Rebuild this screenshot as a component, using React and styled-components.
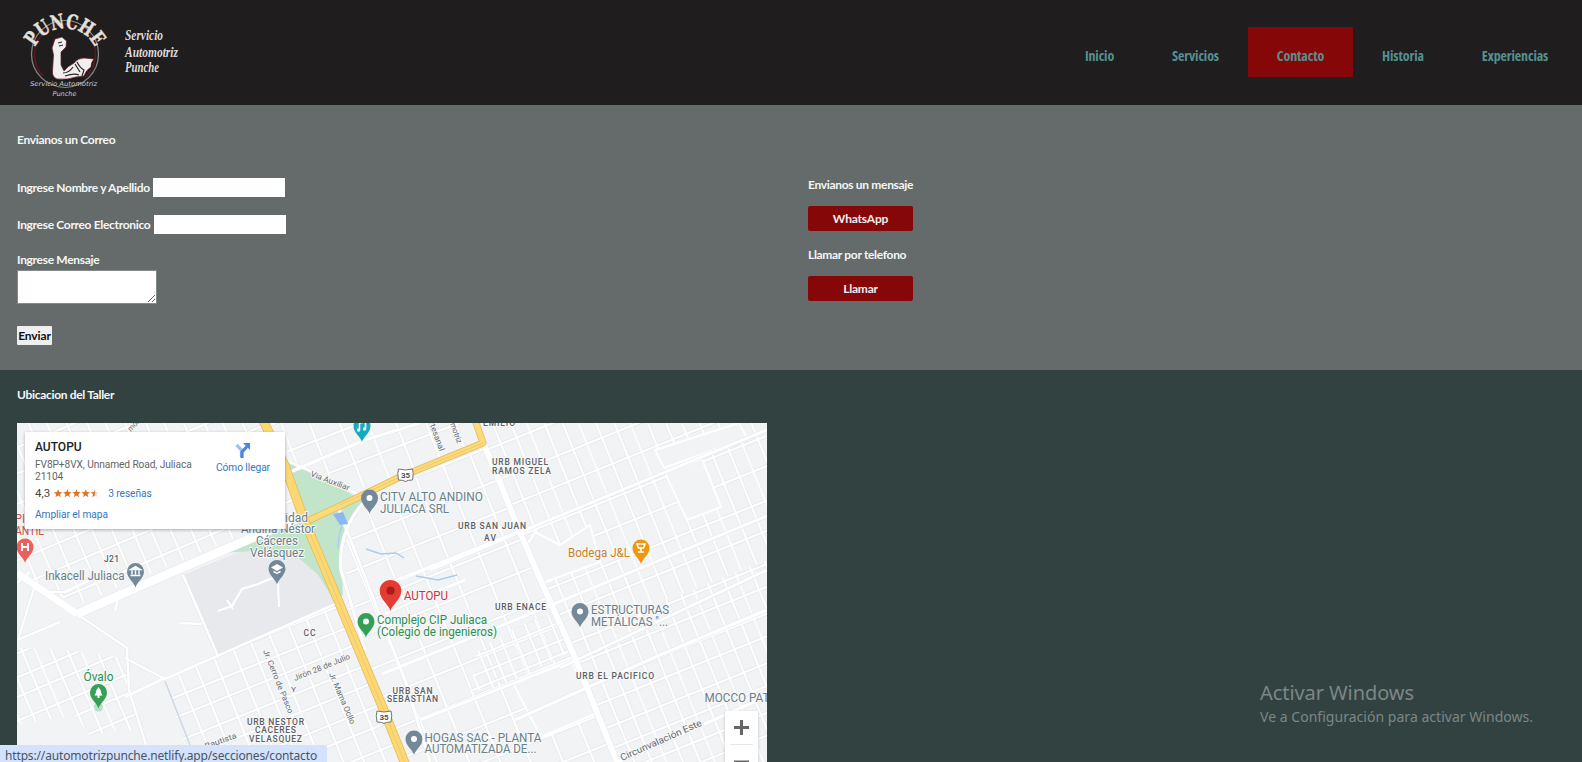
import React from 'react';
import styled, { createGlobalStyle } from 'styled-components';

const Global = createGlobalStyle`
  * { box-sizing: border-box; }
  html, body { margin: 0; height: 100%; overflow: hidden; background: #324241; }
  body { font-family: Lato, "Liberation Sans", sans-serif; }
`;

const Page = styled.div`
  position: relative;
  height: 762px;
  overflow: hidden;
  background: #324241;
`;

const Header = styled.header`
  display: flex;
  align-items: center;
  justify-content: space-between;
  height: 105px;
  padding-right: 5px;
  background: #1f1d1e;
`;

const Nav = styled.nav`
  display: flex;
`;

const NavItem = styled.a`
  display: flex;
  align-items: center;
  justify-content: center;
  width: ${(p) => p.$w}px;
  height: 50px;
  padding-top: 6px;
  margin-bottom: 1px;
  color: #569090;
  background: ${(p) => (p.$active ? '#850708' : 'transparent')};
  font: 700 14px "Open Sans", sans-serif;
  font-stretch: 75%;
  letter-spacing: -0.13px;
  white-space: nowrap;
`;

const ContactArea = styled.section`
  display: flex;
  height: 265px;
  background: #656b6a;
`;

const FormColumn = styled.form`
  width: 808px;
  padding: 26px 0 0 17px;
`;

const Label = styled.div`
  color: #f4f6f6;
  font-weight: 700;
  font-size: 12px;
  line-height: 18px;
  letter-spacing: -0.32px;
  white-space: nowrap;
`;

const FieldRow = styled.div`
  display: flex;
  align-items: center;
  gap: ${(p) => p.$gap}px;
  height: 19px;
  margin-top: ${(p) => p.$top}px;
`;

const Input = styled.input`
  width: 132px;
  height: 19px;
  border: 0;
  background: #fff;
`;

const MessageLabel = styled(Label)`
  margin-top: 17px;
`;

const Message = styled.textarea`
  display: block;
  width: 140px;
  height: 34px;
  margin-top: 1px;
  border: 1px solid #858a8a;
  background: #fff;
`;

const Send = styled.button`
  display: block;
  width: 35px;
  height: 19px;
  margin-top: 22px;
  padding: 0;
  border: 0;
  border-radius: 1px;
  background: #efefef;
  color: #111;
  font: 700 12px Lato, sans-serif;
  letter-spacing: -0.1px;
`;

const ActionColumn = styled.div`
  padding-top: 71px;
`;

const Action = styled.a`
  display: flex;
  align-items: center;
  justify-content: center;
  width: 105px;
  height: 25px;
  margin: 12px 0 15px;
  border-radius: 2px;
  background: #850708;
  color: #f6eeee;
  font-weight: 700;
  font-size: 12px;
  letter-spacing: -0.2px;
`;

const Location = styled.section`
  padding: 16px 0 0 17px;
`;

const MapFrame = styled.div`
  position: relative;
  width: 750px;
  height: 339px;
  margin-top: 19px;
  overflow: hidden;
  background: #f1f3f4;
  & > svg { display: block; }
`;

const PlaceCard = styled.div`
  position: absolute;
  left: 8px;
  top: 9px;
  display: flex;
  justify-content: space-between;
  width: 260px;
  height: 97px;
  padding: 8px 15px 0 10px;
  background: #fff;
  box-shadow: 0 1px 3px rgba(0, 0, 0, 0.3);
  font-family: Roboto, sans-serif;
  font-size: 10.2px;
  line-height: 11.5px;
  color: #666;
`;

const PlaceName = styled.div`
  font-size: 12px;
  font-weight: 500;
  line-height: 15px;
  color: #222;
`;

const Address = styled.div`
  margin-top: 4px;
  letter-spacing: -0.1px;
  white-space: nowrap;
`;

const Rating = styled.div`
  display: flex;
  align-items: center;
  margin-top: 5px;
  font-size: 11.5px;
  line-height: 13px;
  color: #444;
  & > svg { margin: 0 10px 0 4px; }
`;

const MapLink = styled.a`
  display: block;
  margin-top: ${(p) => p.$top || 0}px;
  font-size: 10.2px;
  line-height: 12px;
  letter-spacing: -0.07px;
  color: #2f78c4;
  white-space: nowrap;
`;

const Directions = styled.div`
  display: flex;
  flex-direction: column;
  align-items: center;
  padding-top: 2px;
`;

const ZoomControl = styled.div`
  position: absolute;
  left: 708px;
  top: 288px;
  width: 33px;
  height: 68px;
  background: #fff;
  box-shadow: 0 1px 3px rgba(0, 0, 0, 0.2);
`;

const StatusBar = styled.div`
  position: absolute;
  left: 0;
  bottom: 0;
  width: 327px;
  height: 17px;
  padding: 2px 0 0 5px;
  overflow: hidden;
  border-radius: 0 3px 0 0;
  background: #d3e3fd;
  color: #4b535e;
  font: 12px/18px "Noto Sans", sans-serif;
  letter-spacing: -0.15px;
  white-space: nowrap;
`;

const Watermark = styled.div`
  position: absolute;
  left: 1260px;
  top: 679px;
  color: #7b8787;
  font-family: "Noto Sans", sans-serif;
  white-space: nowrap;
`;

const WatermarkTitle = styled.div`
  font-size: 20px;
  line-height: 28px;
  letter-spacing: -0.07px;
`;

const WatermarkText = styled.div`
  margin-top: -1px;
  font-size: 14px;
  line-height: 21px;
  letter-spacing: 0.03px;
`;

function Logo() {
  return (
    <svg width="220" height="105" viewBox="0 0 220 105">
      <defs>
        <path id="arc" d="M35 47 A33.500 33.500 0 0 1 95 47" />
      </defs>
      <circle cx="65" cy="54" r="33.500" fill="none" stroke="#8b8b8b" strokeWidth="1.200" />
      <circle cx="65" cy="54.500" r="30.500" fill="none" stroke="#5b1a20" strokeWidth="1.500" strokeDasharray="146 46" strokeDashoffset="-72" />
      <path d="M55 39 L62 37 L66.500 41 L66 47 L61 52 L61 65 L64 71 Q68 66 74 63 Q78 58 84 58 L94 59 Q91 62 91 67 Q86 70 84 76 L76 77 Q68 80 57 79 Q52 77 52.500 71 L53.500 55 L52 48 Z" fill="#f0eeee" stroke="#641b20" strokeWidth=".7" />
      <path d="M58 43 L62 42 M59 46 L63 45 M63 73 Q69 73 73 67 M65 76 Q74 73 79 75 M77 62 Q80 68 84 70 L82 76 M75 64 L80 72" fill="none" stroke="#29262a" strokeWidth="1.200" />
      <text fill="none" stroke="#1f1d1e" strokeWidth="3" fontFamily="DejaVu Serif, serif" fontWeight="700" fontSize="20.500" aria-hidden="true" />
      <text fill="#e3e0de" stroke="#e3e0de" strokeWidth=".5" fontFamily="DejaVu Serif, serif" fontWeight="700" fontSize="20">
        <textPath href="#arc" textLength="74" lengthAdjust="spacingAndGlyphs">PUNCHE</textPath>
      </text>
      <g fill="#cfcdcd" fontFamily="DejaVu Sans, sans-serif" fontStyle="italic" fontSize="6.500">
        <text x="30" y="86" textLength="67" lengthAdjust="spacingAndGlyphs">Servicio Automotriz</text>
        <text x="52.500" y="95.500" textLength="24" lengthAdjust="spacingAndGlyphs">Punche</text>
      </g>
      <g fill="#dddbd9" fontFamily="Liberation Serif, cursive" fontStyle="italic" fontWeight="700" fontSize="14.500">
        <text x="125" y="40" textLength="38" lengthAdjust="spacingAndGlyphs">Servicio</text>
        <text x="125" y="56.500" textLength="53" lengthAdjust="spacingAndGlyphs">Automotriz</text>
        <text x="125" y="72" textLength="34" lengthAdjust="spacingAndGlyphs">Punche</text>
      </g>
    </svg>
  );
}

const zones = [
  { w: 18, h: 26, r: -23, pts: '17,423 262,423 300,510 77,605 17,572' },
  { w: 27, h: 33, r: -21, pts: '272,423 474,423 482,442 400,474 362,488 292,462' },
  { w: 29, h: 32, r: -22, pts: '352,512 482,444 530,553 617,762 405,762 349,612 345,550' },
  { w: 16, h: 30, r: -22, pts: '486,448 476,423 767,423 767,560 640,610 560,620' },
  { w: 15, h: 23, r: -22, pts: '560,620 640,610 767,560 767,762 617,762' },
  { w: 14, h: 20, r: -23, pts: '17,648 66,650 125,658 128,690 145,728 90,735 75,715 17,725' },
  { w: 20, h: 21, r: -22, pts: '165,678 340,600 400,762 190,762' },
  { w: 13, h: 15, r: -22, pts: '478,650 520,625 556,612 572,650 500,690 470,690' },
];

const blanks = [
  '665,473 702,459 721,507 687,520',
  '514,685 571,660 597,713 541,737',
  '655,450 739,423 747,438 664,468',
  '560,545 535,532 525,548 540,584 600,562 590,525',
];

const roads = [
  [2.5, '17,640 60,622 M35,585 18,640 M77,614 127,648 129,690 146,745 M125,658 165,679 M165,679 340,602 M125,697 165,678'],
  [2.5, '183,575 218,656 M180,623 202,624 M17,583 30,572 M45,592 65,592 90,580 M120,590 115,611'],
  [3, '290,472 365,440 420,423 M290,462 315,473 370,500 M339,510 405,680 430,762 M365,501 Q338,530 341,570 L365,650'],
  [3, '385,614 435,592 465,580 M430,570 530,528 767,430 M382,674 520,618 767,516 M420,720 560,665 M560,668 767,570'],
  [3.5, '617,762 680,735 767,696 M515,720 660,655 767,610 M390,583 526,529'],
  [7, '17,573 77,614'],
  [9, '77,614 170,573 303,516'],
  [6, '483,442 499,480 517,525 537,572 573,653 617,762'],
];

const labels = [
  ['CITV ALTO ANDINO', 380, 501, 103, 12, '#6a7f88'],
  ['JULIACA SRL', 380, 512.5, 69, 12, '#6a7f88'],
  ['ESTRUCTURAS', 591, 614, 78, 12, '#6a7f88'],
  ['METÁLICAS "...', 591, 626, 77, 12, '#6a7f88'],
  ['HOGAS SAC - PLANTA', 424.5, 741.5, 117, 12, '#6a7f88'],
  ['AUTOMATIZADA DE...', 424.5, 753, 112, 12, '#6a7f88'],
  ['MOCCO PAT', 704.5, 701.5, 65, 12, '#6a7f88'],
  ['Inkacell Juliaca', 45, 580, 79.5, 12, '#6a7f88'],
  ['idad', 285, 521.5, 23, 12, '#6a7f88'],
  ['Andina Néstor', 241, 533, 74, 12, '#6a7f88'],
  ['Cáceres', 256, 545, 42, 12, '#6a7f88'],
  ['Velásquez', 250, 557, 54, 12, '#6a7f88'],
  ['Bodega J&L', 568, 556.5, 62, 12, '#ca8128'],
  ['AUTOPU', 404, 600, 44, 12, '#c5353a'],
  ['Complejo CIP Juliaca', 377, 624, 110, 12, '#27904e'],
  ['(Colegio de ingenieros)', 377, 635.5, 120, 12, '#27904e'],
  ['Óvalo', 83.5, 681, 30, 12, '#27904e'],
  ['PI', 15, 523, 10, 12, '#d64a4a'],
  ['ANTIL', 15, 535, 29, 12, '#d64a4a'],
  ['EMILIO', 483, 426, 32, 8.5],
  ['URB MIGUEL', 492, 465, 56, 8.5],
  ['RAMOS ZELA', 492, 474, 59, 8.5],
  ['URB SAN JUAN', 458, 528.5, 68, 8.5],
  ['AV', 484, 541, 12, 8.5],
  ['URB ENACE', 495, 610, 51, 8.5],
  ['URB EL PACIFICO', 576, 678.5, 78, 8.5],
  ['URB SAN', 392.5, 693.5, 40, 8.5],
  ['SEBASTIAN', 387, 702, 51, 8.5],
  ['URB NESTOR', 247, 724.5, 57, 8.5],
  ['CACERES', 255, 733, 41, 8.5],
  ['VELASQUEZ', 249, 741.5, 53, 8.5],
  ['CC', 303.5, 636, 12, 8.5],
  ['J21', 104, 562, 15, 8.5],
];

const streets = [
  ['Jirón 28 de Julio', 295, 681, 60, -22],
  ['Jr. Cerro de Pasco', 263, 651, 68, 68],
  ['Y', 291, 692, 5, 0],
  ['Jr. Mama Ocllo', 329, 674, 55, 67],
  ['Bautista', 206, 749, 33, -20],
  ['Via Auxiliar', 310, 476, 41, 21],
  ['Artesanal', 427, 417, 37, 70],
  ['motriz', 450, 424, 21, 70],
  ['mor', 131, 432, 13, -48],
  ['Circunvalación Este', 622, 761, 88, -24],
];

const slate = '#73899a';

function Pin({ x, y, s = 1, fill = slate, children }) {
  return (
    <g transform={`translate(${x} ${y}) scale(${s})`}>
      <path d="M0 0 C-1 -5 -8.500 -9 -8.500 -16 A8.500 8.500 0 0 1 8.500 -16 C8.500 -9 1 -5 0 0Z" fill={fill} />
      {children || <circle cx="0" cy="-16" r="3" fill="#fff" />}
    </g>
  );
}

function Shield({ x, y }) {
  return (
    <g>
      <path d={`M${x - 7} ${y - 6} Q${x} ${y - 4} ${x + 7} ${y - 6} Q${x + 8.5} ${y - 2} ${x + 7} ${y + 5} Q${x + 2} ${y + 5} ${x} ${y + 6.5} Q${x - 2} ${y + 5} ${x - 7} ${y + 5} Q${x - 8.5} ${y - 2} ${x - 7} ${y - 6}Z`} fill="#fff" stroke="#70757a" strokeWidth="1" />
      <text x={x} y={y + 3} textAnchor="middle" fontSize="8" fontWeight="700" fill="#4c5055">35</text>
    </g>
  );
}

function StreetMap() {
  return (
    <svg width="750" height="339" viewBox="17 423 750 339" fontFamily="Roboto, sans-serif">
      <defs>
        {zones.map((z, i) => {
          const d = `M2 0V${z.h * 2} M${z.w + 3} 0V${z.h * 2} M${z.w * 2.1} 0V${z.h * 2} M0 3H${z.w * 3} M0 ${z.h + 5}H${z.w * 3}`;
          return (
            <pattern key={i} id={`z${i}`} width={z.w * 3} height={z.h * 2} patternUnits="userSpaceOnUse" patternTransform={`translate(${483 + i * 5} 442) rotate(${z.r})`}>
              <path d={d} stroke="#e5e8eb" strokeWidth="3.300" />
              <path d={d} stroke="#fff" strokeWidth="2.200" />
            </pattern>
          );
        })}
      </defs>
      <rect x="17" y="423" width="750" height="339" fill="#f1f3f4" />
      <path d="M183 575 L260 543 L300 558 L318 575 L337 603 L219 656Z" fill="#e7e9ec" />
      {zones.map((z, i) => <polygon key={i} points={z.pts} fill={`url(#z${i})`} />)}
      {blanks.map((b) => <polygon key={b} points={b} fill="#f1f3f4" stroke="#fff" strokeWidth="2" />)}
      <path d="M285 462 L312 472 L345 490 L364 502 Q344 522 341 550 L343 595 L335 602 L318 575 L300 559 L268 550 L222 553 L303 517Z" fill="#c0e5cb" />
      <path d="M342 526 Q338 536 338 548 M366 549 L381 554 L396 553 L404 558 M416 576 L438 580 L457 575" fill="none" stroke="#a8cdf0" strokeWidth="1.400" />
      <g fill="none" strokeLinejoin="round">
        {roads.map(([w, d]) => <path key={d} d={`M${d}`} stroke="#e3e6ea" strokeWidth={w + 1} />)}
        {roads.map(([w, d]) => <path key={d} d={`M${d}`} stroke="#fff" strokeWidth={w} />)}
        <path d="M165 681 L190 745" stroke="#cbd6e8" strokeWidth="1.400" />
        <path d="M218 611 L232 606 L242 589 L258 584 L285 573 M227 600 L233 609 M278 583 L279 607" stroke="#fff" strokeWidth="2" />
        <path d="M333 514 L343 512 L348 524 L340 525Z" fill="#8bb8f2" />
        <path d="M303 523 L340 506 L400 477 L483 443 L475 420" stroke="#e4b95c" strokeWidth="7" />
        <path d="M303 523 L340 506 L400 477 L483 443 L475 420" stroke="#fbdb79" strokeWidth="5.500" />
        <path d="M263 420 L285 466 L303 517 L325 569 L365 665 L385 713 L406 766" stroke="#e4b95c" strokeWidth="9.500" />
        <path d="M263 420 L285 466 L303 517 L325 569 L365 665 L385 713 L406 766" stroke="#fcd873" strokeWidth="8" />
        <path d="M340 505 L400 477 L483 443 M303 517 L325 569 L365 665 L385 713 L406 766" stroke="#edc468" strokeWidth=".8" />
      </g>
      <Shield x={405.5} y={475} />
      <Shield x={384} y={717} />
      <g stroke="#f7f8f9" strokeWidth="2" paintOrder="stroke" strokeLinejoin="round">
        {labels.map(([t, x, y, w, size, fill]) => (
          <text key={t} x={x} y={y} textLength={w} lengthAdjust={size < 9 ? 'spacing' : 'spacingAndGlyphs'} fontSize={size} fontWeight={size < 9 ? 500 : 400} fill={fill || '#5c6065'}>{t}</text>
        ))}
        {streets.map(([t, x, y, w, r]) => (
          <text key={t} x={x} y={y} textLength={w} lengthAdjust="spacingAndGlyphs" fontSize={t.startsWith('Circ') ? 9.5 : 8} fill="#65696e" transform={`rotate(${r} ${x} ${y})`}>{t}</text>
        ))}
      </g>
      <Pin x={369.5} y={514} />
      <Pin x={580} y={627.5} />
      <Pin x={414} y={755} />
      <Pin x={366} y={637.5} fill="#34a056" />
      <Pin x={390.5} y={611} s={1.27} fill="#e43c32"><circle cy="-16" r="3.200" fill="#a91c1c" /></Pin>
      <Pin x={362} y={442} fill="#13abbd">
        <path d="M-2.500 -12 V-19 L3.500 -20 V-13" fill="none" stroke="#fff" strokeWidth="1.600" />
        <circle cx="-3.500" cy="-12" r="1.700" fill="#fff" /><circle cx="2.500" cy="-13" r="1.700" fill="#fff" />
      </Pin>
      <Pin x={641} y={564} fill="#ee9812">
        <path d="M-4 -20H4L2.500 -16H-2.500Z M0 -16V-12 M-3 -12H3" fill="none" stroke="#fff" strokeWidth="1.500" />
      </Pin>
      <Pin x={135.5} y={587.5}>
        <path d="M-5 -18L0 -21L5 -18Z M-3.500 -17V-13 M0 -17V-13 M3.500 -17V-13 M-5 -12H5" fill="#fff" stroke="#fff" strokeWidth="1.400" />
      </Pin>
      <Pin x={277} y={584.5}>
        <path d="M-6 -17L0 -20.500L6 -17L0 -13.500Z M-3.500 -14V-12L0 -10.500L3.500 -12V-14L0 -12Z" fill="#fff" />
      </Pin>
      <circle cx="98.500" cy="707" r="4.500" fill="#b9dfc6" />
      <Pin x={98.5} y={708.5} fill="#34a056">
        <path d="M0 -21.500L3 -17H2L4 -13H1V-10.500H-1V-13H-4L-2 -17H-3Z" fill="#fff" />
      </Pin>
      <Pin x={25} y={563} fill="#ec5f5a">
        <path d="M-3 -20V-12M3 -20V-12M-3 -16H3" stroke="#fff" strokeWidth="2" />
      </Pin>
    </svg>
  );
}

const star = 'M4 0L5.100 2.900L8.200 3L5.800 5L6.600 8L4 6.300L1.400 8L2.200 5L-.2 3L2.900 2.900Z';

function Stars() {
  return (
    <svg width="44" height="9" viewBox="0 0 43 8.500" fill="#dd7527">
      {[0, 1, 2, 3].map((n) => <path key={n} d={star} transform={`translate(${n * 9} 0)`} />)}
      <path d="M40 0V6.300L37.400 8L38.200 5L35.800 3L38.900 2.900Z" />
      <path d="M40 0L41.100 2.900L43 3L41.800 5L42.600 8L40 6.300Z" fill="#f3d9c6" />
    </svg>
  );
}

function DirectionsIcon() {
  return (
    <svg width="15" height="16" viewBox="0 0 15 16">
      <path d="M1.500 3L6.500 8V15" fill="none" stroke="#9fc3f3" strokeWidth="3.200" />
      <path d="M7 16V10L12 4.500" fill="none" stroke="#4a86dc" strokeWidth="3.200" />
      <path d="M8 1H15V8Z" fill="#4a86dc" />
    </svg>
  );
}

const links = [
  ['Inicio', 87], ['Servicios', 105], ['Contacto', 105], ['Historia', 100], ['Experiencias', 124],
];

export default function App() {
  return (
    <Page>
      <Global />
      <Header>
        <Logo />
        <Nav>
          {links.map(([name, w]) => (
            <NavItem key={name} $w={w} $active={name === 'Contacto'}>{name}</NavItem>
          ))}
        </Nav>
      </Header>
      <ContactArea>
        <FormColumn>
          <Label>Envianos un Correo</Label>
          <FieldRow $top={29} $gap={3}><Label>Ingrese Nombre y Apellido</Label><Input /></FieldRow>
          <FieldRow $top={18} $gap={4}><Label>Ingrese Correo Electronico</Label><Input /></FieldRow>
          <MessageLabel>Ingrese Mensaje</MessageLabel>
          <Message />
          <Send type="button">Enviar</Send>
        </FormColumn>
        <ActionColumn>
          <Label>Envianos un mensaje</Label>
          <Action>WhatsApp</Action>
          <Label>Llamar por telefono</Label>
          <Action>Llamar</Action>
        </ActionColumn>
      </ContactArea>
      <Location>
        <Label>Ubicacion del Taller</Label>
        <MapFrame>
          <StreetMap />
          <PlaceCard>
            <div>
              <PlaceName>AUTOPU</PlaceName>
              <Address>FV8P+8VX, Unnamed Road, Juliaca<br />21104</Address>
              <Rating>4,3<Stars /><MapLink>3 reseñas</MapLink></Rating>
              <MapLink $top={9}>Ampliar el mapa</MapLink>
            </div>
            <Directions>
              <DirectionsIcon />
              <MapLink $top={4}>Cómo llegar</MapLink>
            </Directions>
          </PlaceCard>
          <ZoomControl>
            <svg width="33" height="68" viewBox="0 0 33 68">
              <path d="M9 16.500H24M16.500 9V24M9 51H24" stroke="#666" strokeWidth="3" />
              <path d="M5 33.500H28" stroke="#e6e6e6" />
            </svg>
          </ZoomControl>
        </MapFrame>
      </Location>
      <StatusBar>https://automotrizpunche.netlify.app/secciones/contacto</StatusBar>
      <Watermark>
        <WatermarkTitle>Activar Windows</WatermarkTitle>
        <WatermarkText>Ve a Configuración para activar Windows.</WatermarkText>
      </Watermark>
    </Page>
  );
}
